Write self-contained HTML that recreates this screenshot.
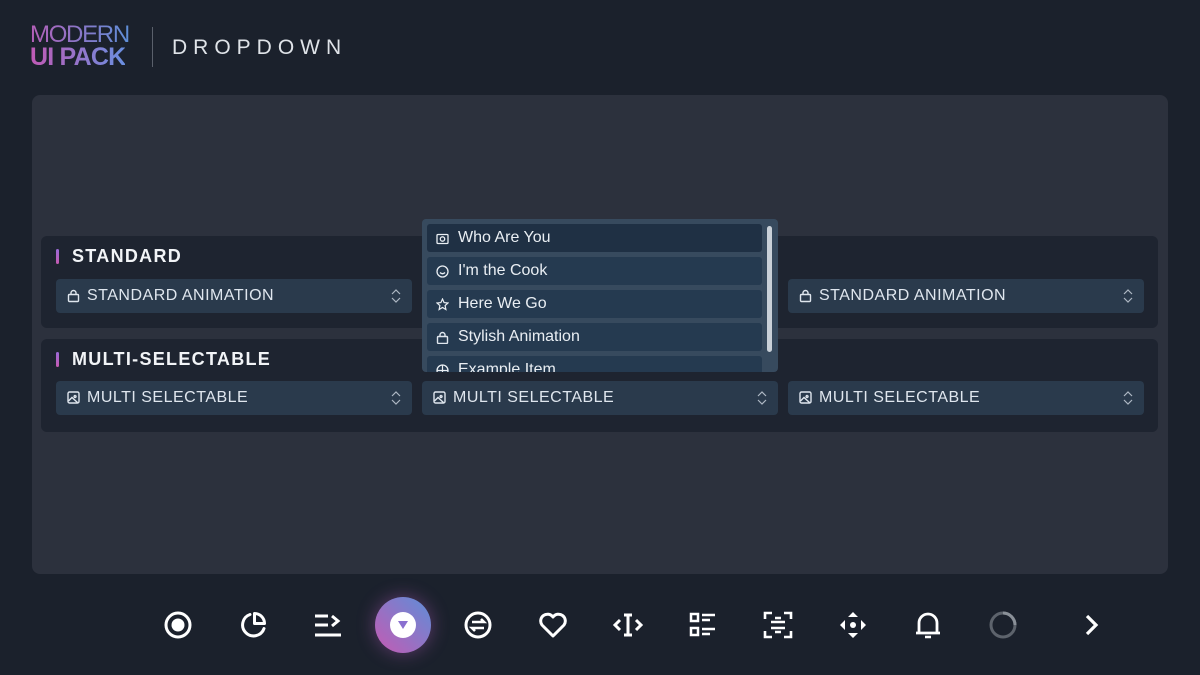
<!DOCTYPE html>
<html><head><meta charset="utf-8"><style>
*{margin:0;padding:0;box-sizing:border-box}
body{width:1200px;height:675px;background:#1b212c;font-family:"Liberation Sans",sans-serif;position:relative;overflow:hidden;color:#e6ebf0}
.a{position:absolute}
.panel{left:32px;top:95px;width:1136px;height:479px;background:#2c313d;border-radius:8px}
.sec{left:41px;width:1117px;background:#1e2430;border-radius:6px}
.h{font-weight:bold;font-size:18px;letter-spacing:1.3px;color:#f2f4f7}
.bar{width:3px;height:15px;background:linear-gradient(#9a6ad8,#c55ab0);border-radius:2px}
.dd{height:34px;width:356px;background:#2a3a4c;border-radius:4px;font-size:16px;letter-spacing:.5px;color:#dfe6ee;display:flex;align-items:center;padding-left:31px}
.dd svg.i{position:absolute;left:11px;top:10px}
.dd svg.c{position:absolute;right:10px;top:9px}
.it{left:427px;width:335px;height:28px;background:#253a50;border-radius:3px;font-size:16px;color:#e9eef3;display:flex;align-items:center;padding-left:31px}
.it svg{position:absolute;left:9px;top:8px}
.ic{position:absolute;top:609px;width:32px;height:32px}
</style></head><body>
<div class="a" style="left:30px;top:24px;font-size:24px;line-height:22px;letter-spacing:-1.3px;background:linear-gradient(90deg,#b55fb8,#5f8fd8);-webkit-background-clip:text;color:transparent">MODERN</div>
<div class="a" style="left:30px;top:45px;font-size:25px;font-weight:bold;line-height:24px;letter-spacing:-.8px;background:linear-gradient(90deg,#c05ab5,#6a8fe0);-webkit-background-clip:text;color:transparent">UI PACK</div>
<div class="a" style="left:152px;top:27px;width:1px;height:40px;background:#5a606b"></div>
<div class="a" style="left:172px;top:36px;font-size:21px;letter-spacing:6px;color:#dfe3e8">DROPDOWN</div>

<div class="a panel"></div>
<div class="a sec" style="top:236px;height:92px"></div>
<div class="a sec" style="top:339px;height:93px"></div>
<div class="a bar" style="left:56px;top:249px"></div>
<div class="a h" style="left:72px;top:246px">STANDARD</div>
<div class="a bar" style="left:56px;top:352px"></div>
<div class="a h" style="left:72px;top:349px">MULTI-SELECTABLE</div>

<svg width="0" height="0" style="position:absolute"><defs>
<g id="lock"><rect x="1.5" y="5.5" width="10" height="7" rx="1" fill="none" stroke="#dfe6ee" stroke-width="1.4"/><path d="M4 5.5V4a2.5 2.5 0 0 1 5 0v1.5" fill="none" stroke="#dfe6ee" stroke-width="1.4"/></g>
<g id="img"><rect x="1" y="1" width="11" height="11" rx="1.5" fill="none" stroke="#dfe6ee" stroke-width="1.4"/><path d="M1.5 10l3.5-3.5 6 5.5M8 4.5a1 1 0 1 0 .1 0" fill="none" stroke="#dfe6ee" stroke-width="1.4"/></g>
<g id="chev"><path d="M2 6l4-4 4 4M2 10l4 4 4-4" fill="none" stroke="#aeb8c4" stroke-width="1.2"/></g>
</defs></svg>

<div class="a dd" style="left:56px;top:279px"><svg class="i" width="14" height="14"><use href="#lock"/></svg>STANDARD ANIMATION<svg class="c" width="12" height="16"><use href="#chev"/></svg></div>
<div class="a dd" style="left:788px;top:279px"><svg class="i" width="14" height="14"><use href="#lock"/></svg>STANDARD ANIMATION<svg class="c" width="12" height="16"><use href="#chev"/></svg></div>
<div class="a dd" style="left:56px;top:381px"><svg class="i" width="14" height="14"><use href="#img"/></svg>MULTI SELECTABLE<svg class="c" width="12" height="16"><use href="#chev"/></svg></div>
<div class="a dd" style="left:422px;top:381px"><svg class="i" width="14" height="14"><use href="#img"/></svg>MULTI SELECTABLE<svg class="c" width="12" height="16"><use href="#chev"/></svg></div>
<div class="a dd" style="left:788px;top:381px"><svg class="i" width="14" height="14"><use href="#img"/></svg>MULTI SELECTABLE<svg class="c" width="12" height="16"><use href="#chev"/></svg></div>

<div class="a" style="left:422px;top:219px;width:356px;height:153px;background:#374a5e;border-radius:4px"></div>
<div class="a" style="left:422px;top:219px;width:356px;height:153px;overflow:hidden">
<div class="a it" style="left:5px;top:5px;background:#1f3044"><svg width="13" height="13"><rect x="1" y="2.5" width="11" height="9" rx="1" fill="none" stroke="#e9eef3" stroke-width="1.3"/><circle cx="6.5" cy="7" r="2.2" fill="none" stroke="#e9eef3" stroke-width="1.3"/></svg>Who Are You</div>
<div class="a it" style="left:5px;top:38px"><svg width="13" height="13"><circle cx="6.5" cy="6.5" r="5.5" fill="none" stroke="#e9eef3" stroke-width="1.3"/><path d="M4 7.5q2.5 2.5 5 0" fill="none" stroke="#e9eef3" stroke-width="1.3"/></svg>I'm the Cook</div>
<div class="a it" style="left:5px;top:71px"><svg width="13" height="13"><path d="M6.5 1l1.6 3.6 3.9.4-2.9 2.6.8 3.9-3.4-2-3.4 2 .8-3.9L1 5l3.9-.4z" fill="none" stroke="#e9eef3" stroke-width="1.2"/></svg>Here We Go</div>
<div class="a it" style="left:5px;top:104px"><svg width="13" height="13"><use href="#lock"/></svg>Stylish Animation</div>
<div class="a it" style="left:5px;top:137px"><svg width="13" height="13"><circle cx="6.5" cy="6.5" r="5.5" fill="none" stroke="#e9eef3" stroke-width="1.3"/><path d="M1 6.5h11M6.5 1v11" stroke="#e9eef3" stroke-width="1.2"/></svg>Example Item</div>
<div class="a" style="left:345px;top:7px;width:5px;height:126px;background:#c9d0d8;border-radius:3px"></div>
</div>

<svg class="ic" style="left:162px" viewBox="0 0 32 32"><circle cx="16" cy="16" r="12" fill="none" stroke="#fff" stroke-width="3"/><circle cx="16" cy="16" r="6.5" fill="#fff"/></svg>
<svg class="ic" style="left:237px" viewBox="0 0 32 32"><path d="M13 5.5A11 11 0 1 0 27 19.5" fill="none" stroke="#fff" stroke-width="3" stroke-linecap="round"/><path d="M17.5 4.5v10h10A10 10 0 0 0 17.5 4.5z" fill="none" stroke="#fff" stroke-width="3" stroke-linejoin="round"/></svg>
<svg class="ic" style="left:312px" viewBox="0 0 32 32"><path d="M3 7h13M3 16h13M3 26h26M20 7l6 5-6 5" fill="none" stroke="#fff" stroke-width="3"/></svg>
<div class="a" style="left:375px;top:597px;width:56px;height:56px;border-radius:50%;background:linear-gradient(45deg,#c55ab3,#5e8ed8);box-shadow:0 0 18px rgba(180,90,190,.45)"></div>
<div class="a" style="left:390px;top:612px;width:26px;height:26px;border-radius:50%;background:#fff"></div>
<svg class="a" style="left:397px;top:620px" width="12" height="10"><path d="M1 1h10L6 9z" fill="#8a70d0"/></svg>
<svg class="ic" style="left:462px" viewBox="0 0 32 32"><circle cx="16" cy="16" r="12" fill="none" stroke="#fff" stroke-width="3"/><path d="M10 13h12l-3-3M22 19H10l3 3" fill="none" stroke="#fff" stroke-width="2.6"/></svg>
<svg class="ic" style="left:537px" viewBox="0 0 32 32"><path d="M16 27L5 16A6.5 6.5 0 0 1 16 8a6.5 6.5 0 0 1 11 8z" fill="none" stroke="#fff" stroke-width="3" stroke-linejoin="round"/></svg>
<svg class="ic" style="left:612px" viewBox="0 0 32 32"><path d="M8 11l-5 5 5 5M24 11l5 5-5 5M12 6h8M12 26h8M16 6v20" fill="none" stroke="#fff" stroke-width="3"/></svg>
<svg class="ic" style="left:687px" viewBox="0 0 32 32"><rect x="4" y="5" width="7" height="7" fill="none" stroke="#fff" stroke-width="2.5"/><rect x="4" y="19" width="7" height="7" fill="none" stroke="#fff" stroke-width="2.5"/><path d="M15 6h13M15 11h8M15 20h13M15 25h8" stroke="#fff" stroke-width="2.5"/></svg>
<svg class="ic" style="left:762px" viewBox="0 0 32 32"><path d="M3 10V4h7M22 4h7v6M29 22v6h-7M10 28H3v-6M9 13h14M9 19h14M13 9h6M13 23h6" fill="none" stroke="#fff" stroke-width="2.6"/></svg>
<svg class="ic" style="left:837px" viewBox="0 0 32 32"><path d="M16 3l-5 5h10zM16 29l-5-5h10zM3 16l5-5v10zM29 16l-5-5v10z" fill="#fff"/><circle cx="16" cy="16" r="3" fill="#fff"/></svg>
<svg class="ic" style="left:912px" viewBox="0 0 32 32"><path d="M7 24V14a9 9 0 0 1 18 0v10zM4 24h24" fill="none" stroke="#fff" stroke-width="2.8" stroke-linejoin="round"/><path d="M13 28h6" stroke="#fff" stroke-width="2.5"/></svg>
<svg class="ic" style="left:987px" viewBox="0 0 32 32"><circle cx="16" cy="16" r="12" fill="none" stroke="#5d636c" stroke-width="3"/><path d="M28 16A12 12 0 0 0 16 4" fill="none" stroke="#8a9098" stroke-width="3"/></svg>
<svg class="ic" style="left:1075px" viewBox="0 0 32 32"><path d="M12 7l9 9-9 9" fill="none" stroke="#fff" stroke-width="3.2"/></svg>
</body></html>
